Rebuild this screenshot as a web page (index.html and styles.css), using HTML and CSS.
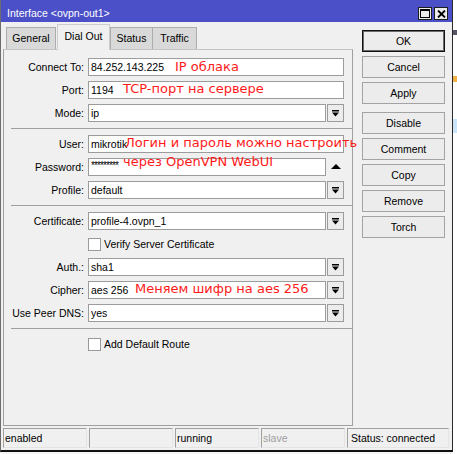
FILE: index.html
```html
<!DOCTYPE html>
<html>
<head>
<meta charset="utf-8">
<link rel="stylesheet" href="styles.css">
</head>
<body>
<div class="screen">
  <div class="window">
    <div class="titlebar">
      <div class="title">Interface &lt;ovpn-out1&gt;</div>
      <div class="title-btns">
        <div class="title-btn"><svg width="10" height="9" viewBox="0 0 10 9"><rect x="0.5" y="0.5" width="9" height="8" fill="none" stroke="#000"/><rect x="0" y="0" width="10" height="2" fill="#000"/></svg></div>
        <div class="title-btn"><svg width="9" height="8" viewBox="0 0 9 8"><path d="M1 0.5 L8 7.5 M8 0.5 L1 7.5" stroke="#000" stroke-width="1.8"/></svg></div>
      </div>
    </div>
    <div class="main">
      <div class="left">
        <div class="tabs">
          <div class="tab t-general">General</div>
          <div class="tab active t-dial">Dial Out</div>
          <div class="tab t-status">Status</div>
          <div class="tab t-traffic">Traffic</div>
        </div>
        <div class="panel">
          <div class="form">
            <div class="row">
              <div class="label">Connect To:</div>
              <div class="field">84.252.143.225</div>
              <span class="note n-ip">IP облака</span>
            </div>
            <div class="row">
              <div class="label">Port:</div>
              <div class="field">1194</div>
              <span class="note n-port">TCP-порт на сервере</span>
            </div>
            <div class="row">
              <div class="label">Mode:</div>
              <div class="combo"><div class="field">ip</div><div class="drop"><svg width="7" height="7" viewBox="0 0 7 7"><rect x="0" y="0" width="7" height="1.5" fill="#000"/><polygon points="0,2.5 7,2.5 3.5,6.5" fill="#000"/></svg></div></div>
            </div>
            <div class="sep"></div>
            <div class="row">
              <div class="label">User:</div>
              <div class="field">mikrotik</div>
              <span class="note n-user">Логин и пароль можно настроить</span>
            </div>
            <div class="row">
              <div class="label">Password:</div>
              <div class="combo"><div class="field pass">*********</div><div class="up"><svg width="10" height="5" viewBox="0 0 10 5"><polygon points="0,5 10,5 5,0" fill="#000"/></svg></div></div>
              <span class="note n-pass">через OpenVPN WebUI</span>
            </div>
            <div class="row">
              <div class="label">Profile:</div>
              <div class="combo"><div class="field">default</div><div class="drop"><svg width="7" height="7" viewBox="0 0 7 7"><rect x="0" y="0" width="7" height="1.5" fill="#000"/><polygon points="0,2.5 7,2.5 3.5,6.5" fill="#000"/></svg></div></div>
            </div>
            <div class="sep"></div>
            <div class="row">
              <div class="label">Certificate:</div>
              <div class="combo"><div class="field">profile-4.ovpn_1</div><div class="drop"><svg width="7" height="7" viewBox="0 0 7 7"><rect x="0" y="0" width="7" height="1.5" fill="#000"/><polygon points="0,2.5 7,2.5 3.5,6.5" fill="#000"/></svg></div></div>
            </div>
            <div class="row check">
              <div class="box"></div>
              <div class="check-text">Verify Server Certificate</div>
            </div>
            <div class="row">
              <div class="label">Auth.:</div>
              <div class="combo"><div class="field">sha1</div><div class="drop"><svg width="7" height="7" viewBox="0 0 7 7"><rect x="0" y="0" width="7" height="1.5" fill="#000"/><polygon points="0,2.5 7,2.5 3.5,6.5" fill="#000"/></svg></div></div>
            </div>
            <div class="row">
              <div class="label">Cipher:</div>
              <div class="combo"><div class="field">aes 256</div><div class="drop"><svg width="7" height="7" viewBox="0 0 7 7"><rect x="0" y="0" width="7" height="1.5" fill="#000"/><polygon points="0,2.5 7,2.5 3.5,6.5" fill="#000"/></svg></div></div>
              <span class="note n-cipher">Меняем шифр на aes 256</span>
            </div>
            <div class="row">
              <div class="label">Use Peer DNS:</div>
              <div class="combo"><div class="field">yes</div><div class="drop"><svg width="7" height="7" viewBox="0 0 7 7"><rect x="0" y="0" width="7" height="1.5" fill="#000"/><polygon points="0,2.5 7,2.5 3.5,6.5" fill="#000"/></svg></div></div>
            </div>
            <div class="sep"></div>
            <div class="row check">
              <div class="box"></div>
              <div class="check-text">Add Default Route</div>
            </div>
          </div>
        </div>
      </div>
      <div class="buttons">
        <div class="btn default">OK</div>
        <div class="btn">Cancel</div>
        <div class="btn">Apply</div>
        <div class="btn group">Disable</div>
        <div class="btn">Comment</div>
        <div class="btn">Copy</div>
        <div class="btn">Remove</div>
        <div class="btn">Torch</div>
      </div>
    </div>
    <div class="statusbar">
      <div class="cell">enabled</div>
      <div class="cell"></div>
      <div class="cell">running</div>
      <div class="cell dim">slave</div>
      <div class="cell wide">Status: connected</div>
    </div>
  </div>
  <div class="outside"></div>
</div>
</body>
</html>
```

FILE: styles.css
```css
html, body {
  margin: 0;
  padding: 0;
}
body {
  width: 457px;
  height: 454px;
  overflow: hidden;
  background: #f4f4f4;
  font-family: "Liberation Sans", Arial, sans-serif;
  font-size: 10.5px;
  color: #000;
}
.screen {
  display: flex;
  height: 454px;
}
.window {
  width: 453px;
  height: 452px;
  box-sizing: border-box;
  border-left: 1px solid #6d6d6d;
  border-right: 1px solid #2a2a2a;
  border-bottom: 2px solid #111;
  background: #f0f0f0;
  display: flex;
  flex-direction: column;
  flex: none;
}
.titlebar {
  flex: none;
  height: 22px;
  background: #4b4fc8;
  color: #fff;
  display: flex;
  align-items: flex-start;
  padding-left: 6px;
}
.title {
  padding-top: 6px;
  line-height: 15px;
}
.title-btns {
  margin-left: auto;
  margin-top: 7px;
  margin-right: 4px;
  display: flex;
  gap: 2px;
}
.title-btn {
  width: 14px;
  height: 13px;
  box-sizing: border-box;
  border: 1px solid #1e1e1e;
  background: #ececec;
  display: flex;
  align-items: center;
  justify-content: center;
}
.title-btn svg {
  display: block;
}
.main {
  flex: none;
  height: 404px;
  display: flex;
}
.left {
  margin-left: 2px;
  width: 350px;
  display: flex;
  flex-direction: column;
}
.tabs {
  margin-top: 2px;
  height: 25px;
  display: flex;
  align-items: flex-end;
  padding-left: 3px;
  position: relative;
  z-index: 1;
}
.tab {
  box-sizing: border-box;
  height: 22px;
  border: 1px solid #adadad;
  border-bottom: none;
  background: #d9d9d9;
  text-align: center;
  line-height: 21px;
}
.tab.active {
  height: 26px;
  margin-bottom: -1px;
  background: #f0f0f0;
  border-color: #cdcdcd;
  line-height: 23px;
}
.t-general { width: 50px; }
.t-dial { width: 53px; margin-left: 1px; }
.t-status { width: 43px; }
.t-traffic { width: 45px; margin-left: -1px; }
.panel {
  height: 377px;
  box-sizing: border-box;
  border: 1px solid #a0a0a0;
  border-top-color: #c4c4c4;
  padding-top: 8px;
}
.form {
  display: flex;
  flex-direction: column;
  gap: 5px;
}
.row {
  position: relative;
  display: flex;
  align-items: center;
  height: 18px;
}
.label {
  width: 80px;
  text-align: right;
  margin-right: 4px;
  white-space: nowrap;
}
.field {
  width: 256px;
  height: 18px;
  box-sizing: border-box;
  border: 1px solid #9c9c9c;
  background: #fff;
  padding-left: 2px;
  line-height: 16px;
  white-space: nowrap;
  overflow: hidden;
}
.combo {
  display: flex;
  gap: 1px;
}
.combo .field {
  width: 238px;
}
.drop {
  width: 17px;
  height: 18px;
  box-sizing: border-box;
  border: 1px solid #9c9c9c;
  background: #ececec;
  display: flex;
  align-items: center;
  justify-content: center;
}
.drop svg, .up svg {
  display: block;
}
.up {
  width: 17px;
  height: 18px;
  display: flex;
  align-items: center;
  justify-content: center;
  padding-bottom: 1px;
  box-sizing: border-box;
}
.pass {
  letter-spacing: -0.9px;
  font-size: 10px;
  line-height: 14px;
}
.sep {
  height: 1px;
  background: #a0a0a0;
  margin: 1px 0 1px 7px;
}
.check .box {
  margin-left: 84px;
  width: 13px;
  height: 13px;
  box-sizing: border-box;
  border: 1px solid #9a9a9a;
  background: #fff;
}
.check-text {
  margin-left: 3px;
}
.note {
  position: absolute;
  font-family: "DejaVu Sans", Verdana, sans-serif;
  font-size: 13px;
  line-height: 15px;
  color: #ff1a1a;
  white-space: nowrap;
}
.n-ip { left: 171px; top: 1px; }
.n-port { left: 119px; top: 0; }
.n-user { left: 121px; top: 0; }
.n-pass { left: 119px; top: -4px; }
.n-cipher { left: 131px; top: 0; }
.buttons {
  margin-left: 9px;
  margin-top: 8px;
  width: 83px;
  display: flex;
  flex-direction: column;
  gap: 4px;
}
.btn {
  height: 22px;
  box-sizing: border-box;
  border: 1px solid #a3a3a3;
  background: #ececec;
  text-align: center;
  line-height: 20px;
}
.btn.default {
  border-color: #111;
  box-shadow: inset 0 0 0 1px #6a6a6a;
}
.btn.group {
  margin-top: 4px;
}
.statusbar {
  flex: none;
  margin: 2px 0 0 2px;
  height: 20px;
  display: flex;
  gap: 2px;
}
.cell {
  width: 84px;
  height: 20px;
  box-sizing: border-box;
  border: 1px solid;
  border-color: #a0a0a0 #e4e4e4 #e4e4e4 #a0a0a0;
  padding-left: 1px;
  line-height: 18px;
  white-space: nowrap;
}
.cell.wide {
  width: 102px;
  padding-left: 3px;
}
.cell.dim {
  color: #a0a0a0;
}
.outside {
  flex: none;
  width: 4px;
  height: 454px;
  background: linear-gradient(to bottom, #fff 0 30px, #556 30px 35px, #fff 35px 76px, #f2b24a 76px 82px, #fff 82px 119px, #cce4f7 119px 133px, #fff 133px);
}
```
